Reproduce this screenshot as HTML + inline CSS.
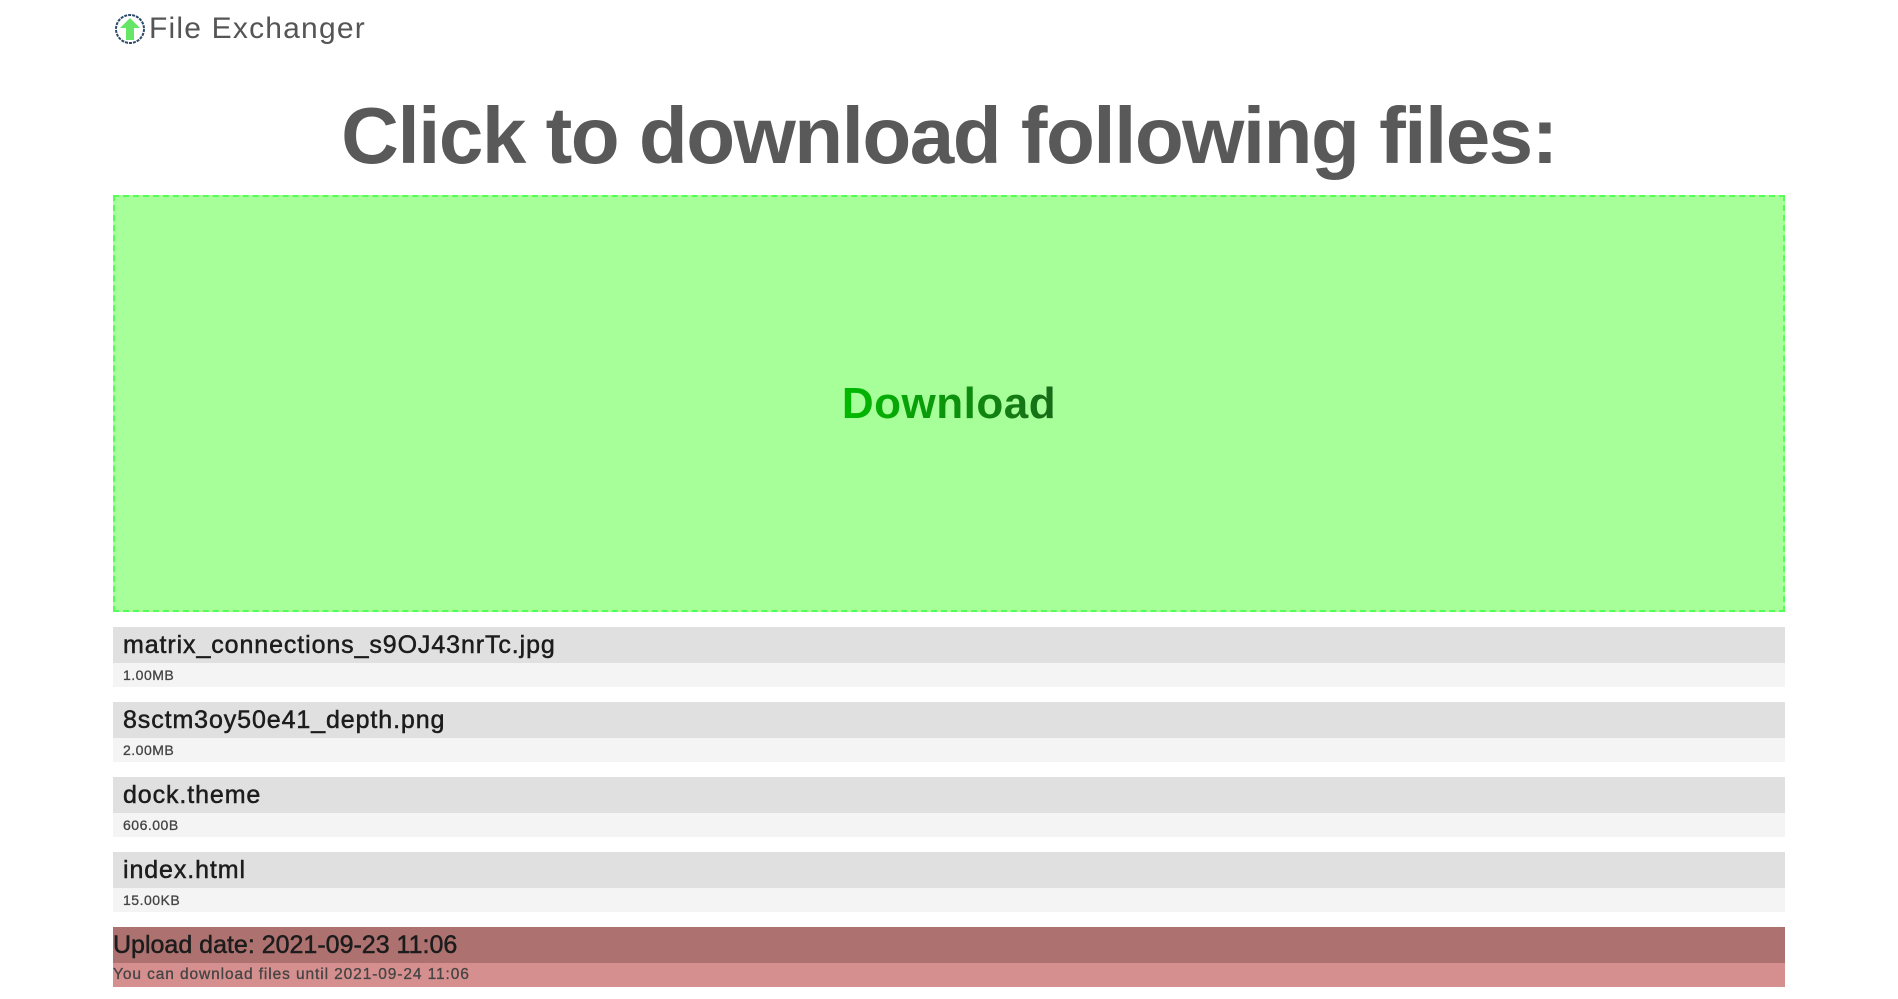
<!DOCTYPE html>
<html><head><style>
body{margin:0;background:#fff;font-family:"Liberation Sans",sans-serif;width:1898px;height:999px;overflow:hidden;position:relative}
.hdr{position:absolute;left:114px;top:12px;display:flex;align-items:center;color:#555;font-size:30px}
.hdr span{margin-left:3px;letter-spacing:1.2px}
h1{position:absolute;left:0;width:1898px;top:86px;margin:0;text-align:center;font-size:80px;font-weight:bold;color:#595959;line-height:100px;letter-spacing:-1.5px}
.dl{position:absolute;left:113px;top:195px;width:1668px;height:413px;background:#a6ff98;border:2px dashed #5f5;display:flex;align-items:center;justify-content:center}
.dl b{font-size:44px;background:linear-gradient(90deg,#0b0,#186a18);-webkit-background-clip:text;color:transparent;letter-spacing:0.5px}
.row{position:absolute;left:113px;width:1672px}
.row .n{height:36px;background:#e0e0e0;color:#1c1c1c;font-size:25px;line-height:36px;padding-left:10px;letter-spacing:0.9px;-webkit-text-stroke:0.5px #1c1c1c}
.row .s{height:24px;background:#f4f4f4;color:#444;font-size:14px;line-height:24px;padding-left:10px;letter-spacing:0.5px;-webkit-text-stroke:0.3px #444}
.red .n{background:#ad7270;padding-left:0;letter-spacing:0}
.red .s{background:#d58f8e;padding-left:0;color:#444;font-size:15.5px;letter-spacing:0.9px}
</style></head><body>
<div class="hdr"><svg width="32" height="32" viewBox="0 0 32 32"><circle cx="16" cy="16" r="14" fill="#fff" stroke="#2d4a6a" stroke-width="2" stroke-dasharray="3 1"/><path d="M16 5 L26 15 L20 15 L20 27 L12 27 L12 15 L6 15 Z" fill="#66e666"/></svg><span>File Exchanger</span></div>
<h1>Click to download following files:</h1>
<div class="dl"><b>Download</b></div>
<div class="row" style="top:627px"><div class="n">matrix_connections_s9OJ43nrTc.jpg</div><div class="s">1.00MB</div></div>
<div class="row" style="top:702px"><div class="n">8sctm3oy50e41_depth.png</div><div class="s">2.00MB</div></div>
<div class="row" style="top:777px"><div class="n">dock.theme</div><div class="s">606.00B</div></div>
<div class="row" style="top:852px"><div class="n">index.html</div><div class="s">15.00KB</div></div>
<div class="row red" style="top:927px"><div class="n">Upload date: 2021-09-23 11:06</div><div class="s">You can download files until 2021-09-24 11:06</div></div>
</body></html>
